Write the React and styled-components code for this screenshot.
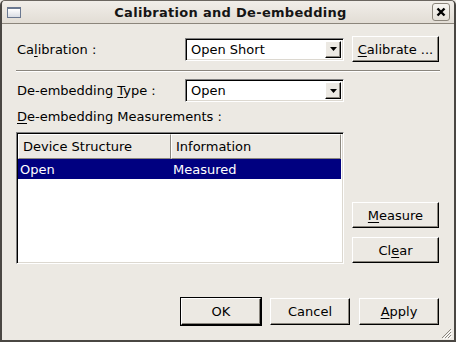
import React from "react";
import styled, { createGlobalStyle } from "styled-components";

const Global = createGlobalStyle`
  html, body { margin: 0; padding: 0; background: #ece9e3; }
  body { font-family: "DejaVu Sans", "Liberation Sans", sans-serif; font-size: 13px; color: #000; }
  * { box-sizing: border-box; }
`;

const Window = styled.div`
  width: 456px;
  height: 342px;
  display: flex;
  flex-direction: column;
  background: #ece9e3;
  border: 2px solid #4a4743;
  border-top: 1px solid #6b6660;
  border-radius: 5px 5px 0 0;
  overflow: hidden;
`;

const TitleBar = styled.div`
  height: 23px;
  flex: none;
  display: flex;
  align-items: center;
  padding: 0 4px 0 5px;
  background: linear-gradient(#f1eee9, #e2ddd5);
  border-bottom: 1px solid #8b857b;
`;

const TitleIcon = styled.div`
  width: 14px;
  height: 11px;
  border: 1px solid #6a7890;
  border-top-width: 2px;
  background: linear-gradient(#ffffff, #d9dde4);
  flex: none;
`;

const TitleText = styled.div`
  flex: 1;
  text-align: center;
  font-weight: bold;
  font-size: 13px;
  letter-spacing: 0.3px;
  color: #151515;
  padding-left: 8px;
`;

const CloseBox = styled.div`
  width: 18px;
  height: 18px;
  border: 1px solid #8b857b;
  border-radius: 3px;
  background: linear-gradient(#f7f5f1, #e4e0d8);
  display: flex;
  align-items: center;
  justify-content: center;
  flex: none;
`;

const Body = styled.div`
  flex: 1;
  display: flex;
  flex-direction: column;
  padding: 12px 14px 15px 14px;
`;

const Row = styled.div`
  display: flex;
  align-items: center;
  height: ${(p) => p.$h || 26}px;
`;

const Label = styled.div`
  width: 169px;
  padding-left: 1px;
  flex: none;
  white-space: nowrap;
`;

const Combo = styled.div`
  width: 159px;
  height: 23px;
  display: flex;
  align-items: center;
  background: #fff;
  border-top: 1px solid #808080;
  border-left: 1px solid #808080;
  border-right: 1px solid #fff;
  border-bottom: 1px solid #fff;
  box-shadow: inset 1px 1px 0 #000, inset -1px -1px 0 #dcd8d0;
  padding: 1px 2px 1px 5px;
`;

const ComboText = styled.div`
  flex: 1;
`;

const ArrowBtn = styled.div`
  width: 16px;
  height: 17px;
  background: #ece9e3;
  border-top: 1px solid #fff;
  border-left: 1px solid #fff;
  border-right: 1px solid #000;
  border-bottom: 1px solid #000;
  box-shadow: inset -1px -1px 0 #8a867e;
  display: flex;
  align-items: center;
  justify-content: center;
`;

const Button = styled.div`
  width: ${(p) => p.$w || 80}px;
  height: ${(p) => p.$h || 26}px;
  flex: none;
  display: flex;
  align-items: center;
  justify-content: center;
  background: #ece9e3;
  border-top: 1px solid #fff;
  border-left: 1px solid #fff;
  border-right: 1px solid #000;
  border-bottom: 1px solid #000;
  box-shadow: inset -1px -1px 0 #8a867e;
  outline: ${(p) => (p.$default ? "1px solid #000" : "none")};
  white-space: nowrap;
`;

const Separator = styled.div`
  height: 2px;
  margin: 8px 0 7px 0;
  border-top: 1px solid #8a867e;
  border-bottom: 1px solid #fff;
`;

const Middle = styled.div`
  display: flex;
  gap: 8px;
`;

const Table = styled.div`
  width: 328px;
  height: 132px;
  flex: none;
  background: #fff;
  border-top: 1px solid #808080;
  border-left: 1px solid #808080;
  border-right: 1px solid #fff;
  border-bottom: 1px solid #fff;
  box-shadow: inset 1px 1px 0 #000, inset -1px -1px 0 #dcd8d0;
  padding: 1px 2px 2px 1px;
  display: flex;
  flex-direction: column;
`;

const Header = styled.div`
  display: grid;
  grid-template-columns: 153px 1fr;
  height: 25px;
`;

const HeaderCell = styled.div`
  background: #ece9e3;
  border-top: 1px solid #fff;
  border-left: 1px solid #fff;
  border-right: 1px solid #8a867e;
  border-bottom: 1px solid #8a867e;
  display: flex;
  align-items: center;
  padding-left: 4px;
`;

const DataRow = styled.div`
  display: grid;
  grid-template-columns: 153px 1fr;
  height: 20px;
  background: ${(p) => (p.$selected ? "#000080" : "transparent")};
  color: ${(p) => (p.$selected ? "#fff" : "#000")};
`;

const DataCell = styled.div`
  display: flex;
  align-items: center;
  padding-left: 2px;
`;

const SideCol = styled.div`
  display: flex;
  flex-direction: column;
  justify-content: flex-end;
  gap: 9px;
  padding-bottom: 1px;
`;

const Footer = styled.div`
  margin-top: auto;
  display: flex;
  justify-content: flex-end;
  gap: 9px;
  padding-right: 1px;
  position: relative;
`;

const Grip = styled.svg`
  position: absolute;
  right: -12px;
  bottom: -14px;
`;

const U = styled.span`
  text-decoration: underline;
  text-underline-offset: 2px;
`;

const DownArrow = () => (
  <svg width="7" height="4" viewBox="0 0 7 4">
    <polygon points="0,0 7,0 3.5,4" fill="#000" />
  </svg>
);

export default function App() {
  return (
    <>
      <Global />
      <Window>
        <TitleBar>
          <TitleIcon />
          <TitleText>Calibration and De-embedding</TitleText>
          <CloseBox>
            <svg width="10" height="10" viewBox="0 0 10 10">
              <path d="M1.5 1.5 L8.5 8.5 M8.5 1.5 L1.5 8.5" stroke="#000" strokeWidth="2.4" />
            </svg>
          </CloseBox>
        </TitleBar>
        <Body>
          <Row $h={26}>
            <Label>
              Ca<U>l</U>ibration :
            </Label>
            <Combo>
              <ComboText>Open Short</ComboText>
              <ArrowBtn>
                <DownArrow />
              </ArrowBtn>
            </Combo>
            <Button $w={87} style={{ marginLeft: 8 }}>
              <U>C</U>alibrate ...
            </Button>
          </Row>
          <Separator />
          <Row $h={23}>
            <Label>
              De-embedding <U>T</U>ype :
            </Label>
            <Combo>
              <ComboText>Open</ComboText>
              <ArrowBtn>
                <DownArrow />
              </ArrowBtn>
            </Combo>
          </Row>
          <Row $h={16} style={{ marginTop: 6, marginBottom: 8 }}>
            <Label>
              <U>D</U>e-embedding Measurements :
            </Label>
          </Row>
          <Middle>
            <Table>
              <Header>
                <HeaderCell>Device Structure</HeaderCell>
                <HeaderCell>Information</HeaderCell>
              </Header>
              <DataRow $selected>
                <DataCell>Open</DataCell>
                <DataCell>Measured</DataCell>
              </DataRow>
            </Table>
            <SideCol>
              <Button $w={87}>
                <U>M</U>easure
              </Button>
              <Button $w={87}>
                Cl<U>e</U>ar
              </Button>
            </SideCol>
          </Middle>
          <Footer>
            <Button $w={80} $h={27} $default>
              OK
            </Button>
            <Button $w={80} $h={27}>
              Cancel
            </Button>
            <Button $w={80} $h={27}>
              <U>A</U>pply
            </Button>
            <Grip width="12" height="12" viewBox="0 0 12 12">
              <path d="M11 2 L2 11 M11 5 L5 11 M11 8 L8 11" stroke="#8a867e" strokeWidth="1" />
              <path d="M12 3 L3 12 M12 6 L6 12 M12 9 L9 12" stroke="#fff" strokeWidth="1" />
            </Grip>
          </Footer>
        </Body>
      </Window>
    </>
  );
}
